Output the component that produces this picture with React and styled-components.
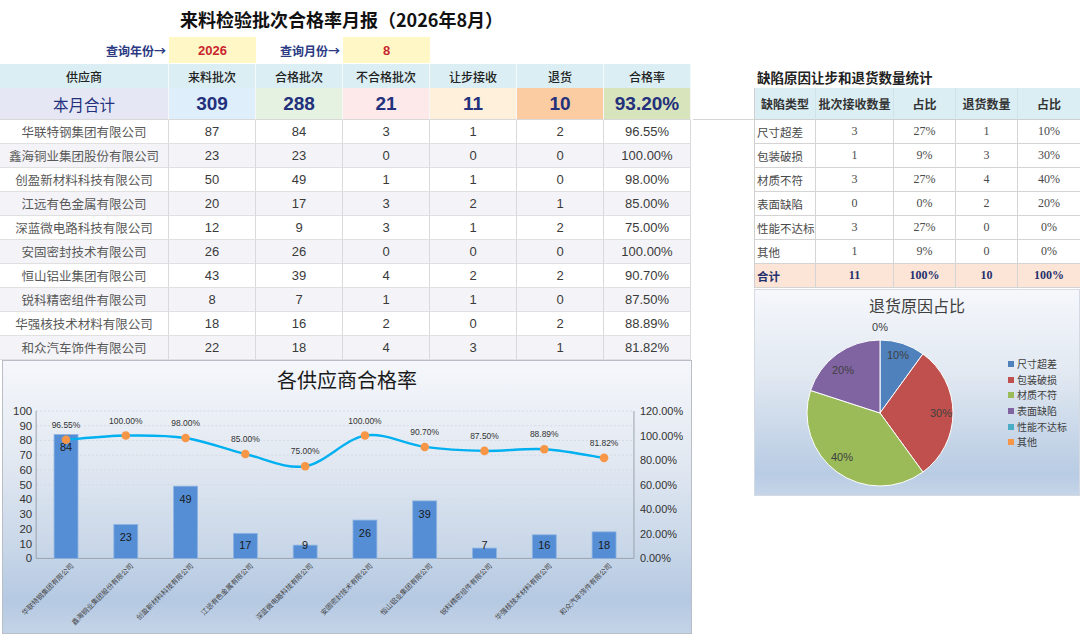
import styled, { createGlobalStyle } from 'styled-components';

const CJK = `"Noto Sans CJK SC", "Liberation Sans", sans-serif`;
const NUM = `"Liberation Sans", "Noto Sans CJK SC", sans-serif`;
const SERIFNUM = `"Liberation Serif", "Noto Sans CJK SC", serif`;

const suppliers = [
  ['华联特钢集团有限公司', 87, 84, 3, 1, 2, 96.55],
  ['鑫海铜业集团股份有限公司', 23, 23, 0, 0, 0, 100],
  ['创盈新材料科技有限公司', 50, 49, 1, 1, 0, 98],
  ['江远有色金属有限公司', 20, 17, 3, 2, 1, 85],
  ['深蓝微电路科技有限公司', 12, 9, 3, 1, 2, 75],
  ['安固密封技术有限公司', 26, 26, 0, 0, 0, 100],
  ['恒山铝业集团有限公司', 43, 39, 4, 2, 2, 90.7],
  ['锐科精密组件有限公司', 8, 7, 1, 1, 0, 87.5],
  ['华强核技术材料有限公司', 18, 16, 2, 0, 2, 88.89],
  ['和众汽车饰件有限公司', 22, 18, 4, 3, 1, 81.82],
];

const defects = [
  ['尺寸超差', 3, '27%', 1, '10%'],
  ['包装破损', 1, '9%', 3, '30%'],
  ['材质不符', 3, '27%', 4, '40%'],
  ['表面缺陷', 0, '0%', 2, '20%'],
  ['性能不达标', 3, '27%', 0, '0%'],
  ['其他', 1, '9%', 0, '0%'],
];

const headers = ['供应商', '来料批次', '合格批次', '不合格批次', '让步接收', '退货', '合格率'];
const totals = ['本月合计', '309', '288', '21', '11', '10', '93.20%'];
const totalColors = ['#e6e7f4', '#deeefa', '#e5f2e2', '#fde8ea', '#fef0da', '#fbcba2', '#d8e4bb'];

const pieColors = ['#4f81bd', '#c0504d', '#9bbb59', '#8064a2', '#4bacc6', '#f79646'];

const GlobalStyle = createGlobalStyle`
  html, body { margin: 0; padding: 0; background: #fff; }
  body { font-family: ${CJK}; }
`;

const Page = styled.div`
  width: 1080px;
  height: 636px;
  overflow: hidden;
  display: grid;
  grid-template-columns: 693px 61px 326px;
  align-items: start;
`;

const LeftCol = styled.div`
  display: flex;
  flex-direction: column;
`;

const ReportTitle = styled.h1`
  margin: 0;
  height: 37px;
  display: flex;
  align-items: center;
  justify-content: center;
  padding-right: 10px;
  font: 700 18px ${CJK};
  color: #111;
`;

const QueryRow = styled.div`
  display: grid;
  grid-template-columns: 169px repeat(6, 87px);
  height: 27px;
`;

const QueryLabel = styled.div`
  display: flex;
  align-items: center;
  justify-content: flex-end;
  padding-right: 3px;
  font: 700 12px ${CJK};
  color: #2b3a82;
`;

const QueryValue = styled.div`
  display: flex;
  align-items: center;
  justify-content: center;
  height: 26px;
  background: #fff8c6;
  font: 700 13px ${NUM};
  color: #c8262d;
`;

const Sheet = styled.div`
  display: grid;
  grid-template-columns: 169px repeat(6, 87px);
  grid-template-rows: 24px 32px repeat(10, 24px);
  width: 691px;
`;

const HeadCell = styled.div`
  display: flex;
  align-items: center;
  justify-content: center;
  background: #daeef3;
  border-right: 1px solid #f4fafb;
  font: 500 12px ${CJK};
  color: #222;
`;

const TotalCell = styled.div`
  display: flex;
  align-items: center;
  justify-content: center;
  background: ${(p) => p.$bg};
  border-right: 1px solid #f7f7f7;
  border-bottom: 1px solid #d8d8d8;
  color: #23307c;
  font: ${(p) => (p.$label ? `400 15.5px ${CJK}` : `700 19px ${NUM}`)};
`;

const DataCell = styled.div`
  display: flex;
  align-items: center;
  justify-content: center;
  background: ${(p) => (p.$alt ? '#f4f4f8' : '#fff')};
  border-right: 1px solid #dadada;
  border-bottom: 1px solid #e0e0e0;
  color: ${(p) => (p.$name ? '#595959' : '#3a3a3a')};
  font: ${(p) => (p.$name ? `400 12.5px ${CJK}` : `400 13px ${NUM}`)};
  white-space: nowrap;
`;

const ChartPanel = styled.div`
  margin-left: 2px;
  width: 690px;
  height: 274px;
  box-sizing: border-box;
  border: 1px solid #b9bec6;
  background: linear-gradient(180deg, #f5f7fb 0%, #e3e9f2 35%, #c7d6e8 70%, #b5c9e2 88%, #c4d3e7 100%);
  display: flex;
  flex-direction: column;
`;

const ChartTitle = styled.div`
  height: 37px;
  display: flex;
  align-items: center;
  justify-content: center;
  font: 400 20px ${CJK};
  color: #1a1a1a;
`;

const GapCol = styled.div`
  height: 120px;
  box-sizing: border-box;
  border-bottom: 1px solid #d6d6d6;
`;

const RightCol = styled.div`
  display: flex;
  flex-direction: column;
  padding-top: 66px;
`;

const SideTitle = styled.div`
  height: 22px;
  display: flex;
  align-items: center;
  padding-left: 3px;
  font: 700 13.5px ${CJK};
  color: #222;
`;

const DefectGrid = styled.div`
  display: grid;
  grid-template-columns: 61px 78px 62px 62px 63px;
  grid-template-rows: 32px repeat(7, 24px);
  border-left: 1px solid #cfcfcf;
`;

const DefectHead = styled.div`
  display: flex;
  align-items: center;
  justify-content: center;
  background: #daeef3;
  border-right: 1px solid #cfe3ea;
  border-bottom: 1px solid #cfcfcf;
  font: 600 12px ${CJK};
  color: #333;
  white-space: nowrap;
`;

const DefectCell = styled.div`
  display: flex;
  align-items: center;
  justify-content: ${(p) => (p.$left ? 'flex-start' : 'center')};
  padding-left: ${(p) => (p.$left ? '2px' : '0')};
  background: ${(p) => (p.$total ? '#fce5d6' : '#fff')};
  border-right: 1px solid #d4d4d4;
  border-bottom: 1px solid #d4d4d4;
  color: ${(p) => (p.$total ? '#24306e' : '#4a4a4a')};
  font: ${(p) => (p.$left ? `${p.$total ? 600 : 400} 11.5px ${CJK}` : `${p.$total ? 700 : 400} 12px ${SERIFNUM}`)};
  white-space: nowrap;
`;

const PiePanel = styled.div`
  margin-top: 1px;
  height: 207px;
  box-sizing: border-box;
  border: 1px solid #d3dae4;
  background: linear-gradient(180deg, #f5f7fb 0%, #e2e9f2 40%, #c4d4e7 75%, #b8cce4 90%, #c6d5e8 100%);
  display: flex;
  flex-direction: column;
`;

const PieTitle = styled.div`
  height: 30px;
  display: flex;
  align-items: center;
  justify-content: center;
  font: 400 16px ${CJK};
  color: #404040;
`;

function smoothPath(pts) {
  let d = `M${pts[0][0]},${pts[0][1]}`;
  for (let i = 0; i < pts.length - 1; i++) {
    const p0 = pts[i - 1] || pts[i];
    const p1 = pts[i];
    const p2 = pts[i + 1];
    const p3 = pts[i + 2] || p2;
    const c1x = p1[0] + (p2[0] - p0[0]) / 6;
    const c1y = p1[1] + (p2[1] - p0[1]) / 6;
    const c2x = p2[0] - (p3[0] - p1[0]) / 6;
    const c2y = p2[1] - (p3[1] - p1[1]) / 6;
    d += ` C${c1x.toFixed(1)},${c1y.toFixed(1)} ${c2x.toFixed(1)},${c2y.toFixed(1)} ${p2[0]},${p2[1].toFixed(1)}`;
  }
  return d;
}

function RateChart() {
  const L = 35, R = 635, T = 410, B = 558, H = B - T;
  const cx = (i) => 65 + 60 * i;
  const yLeft = (v) => B - (v / 100) * H;
  const yRight = (p) => B - (p / 120) * H;
  const pts = suppliers.map((s, i) => [cx(i), yRight(s[6])]);

  return (
    <svg width="688" height="236" viewBox="0 0 688 236">
      <g transform="translate(-3,-397)">
        {[10, 20, 30, 40, 50, 60, 70, 80, 90, 100].map((v) => (
          <line key={v} x1={L} x2={R} y1={yLeft(v)} y2={yLeft(v)} stroke="#d4dbe6" strokeDasharray="2 2" />
        ))}
        <line x1={L} x2={L} y1={T} y2={B} stroke="#9aa3ad" />
        <line x1={R} x2={R} y1={T} y2={B} stroke="#9aa3ad" />
        <line x1={L} x2={R} y1={B} y2={B} stroke="#9aa3ad" />
        {[0, 10, 20, 30, 40, 50, 60, 70, 80, 90, 100].map((v) => (
          <text key={v} x={31} y={yLeft(v) + 4} textAnchor="end" fontSize="11.5" fill="#333" fontFamily={NUM}>{v}</text>
        ))}
        {[0, 20, 40, 60, 80, 100, 120].map((p) => (
          <text key={p} x={641} y={yRight(p) + 4} fontSize="11" fill="#333" fontFamily={NUM}>{p.toFixed(2)}%</text>
        ))}
        {suppliers.map((s, i) => {
          const top = yLeft(s[2]);
          const ly = Math.min(top + 13, B - 13.5);
          return (
            <g key={s[0]}>
              <rect x={cx(i) - 12} y={top} width="24" height={B - top} fill="#558ed5" stroke="#8db3e2" strokeWidth="0.8" />
              <text x={cx(i)} y={ly + 4} textAnchor="middle" fontSize="11" fill="#1a1a1a" fontFamily={NUM}>{s[2]}</text>
              <text
                x={cx(i) + 8}
                y={566}
                textAnchor="end"
                fontSize="7"
                fill="#444"
                fontFamily={CJK}
                transform={`rotate(-45 ${cx(i) + 8} 566)`}
              >
                {s[0]}
              </text>
            </g>
          );
        })}
        <path d={smoothPath(pts)} fill="none" stroke="#00b0f0" strokeWidth="2.4" />
        {pts.map(([x, y], i) => (
          <g key={i}>
            <circle cx={x} cy={y} r="4.3" fill="#f79646" />
            <text x={x} y={y - 12} textAnchor="middle" fontSize="8.5" fill="#333" fontFamily={NUM}>
              {suppliers[i][6].toFixed(2)}%
            </text>
          </g>
        ))}
      </g>
    </svg>
  );
}

function slicePath(cx, cy, r, a0, a1) {
  const x0 = cx + r * Math.cos(a0), y0 = cy + r * Math.sin(a0);
  const x1 = cx + r * Math.cos(a1), y1 = cy + r * Math.sin(a1);
  const large = a1 - a0 > Math.PI ? 1 : 0;
  return `M${cx},${cy} L${x0.toFixed(2)},${y0.toFixed(2)} A${r},${r} 0 ${large} 1 ${x1.toFixed(2)},${y1.toFixed(2)} Z`;
}

function ReturnPie() {
  const cx = 880, cy = 413, r = 73;
  const shares = [0.1, 0.3, 0.4, 0.2, 0, 0];
  let acc = -Math.PI / 2;
  const slices = shares.map((v, i) => {
    const a0 = acc;
    acc += v * Math.PI * 2;
    return { a0, a1: acc, color: pieColors[i], v };
  });
  const labels = [
    ['10%', 898, 355], ['30%', 941, 413], ['40%', 842, 457], ['20%', 843, 370], ['0%', 880, 327],
  ];
  const legendY = [364, 380, 395, 411, 427, 442];

  return (
    <svg width="324" height="175" viewBox="0 0 324 175">
      <g transform="translate(-755,-320)">
        {slices.filter((s) => s.v > 0).map((s) => (
          <path key={s.color} d={slicePath(cx, cy, r, s.a0, s.a1)} fill={s.color} stroke="#fff" strokeWidth="1" />
        ))}
        {labels.map(([t, x, y]) => (
          <text key={t + x} x={x} y={y + 4} textAnchor="middle" fontSize="11" fill="#404040" fontFamily={NUM}>{t}</text>
        ))}
        {defects.map((d, i) => (
          <g key={d[0]}>
            <rect x={1008} y={legendY[i] - 3} width="6" height="6" fill={pieColors[i]} />
            <text x={1017} y={legendY[i] + 3.5} fontSize="10" fill="#404040" fontFamily={CJK}>{d[0]}</text>
          </g>
        ))}
      </g>
    </svg>
  );
}

export default function App() {
  return (
    <>
      <GlobalStyle />
      <Page>
        <LeftCol>
          <ReportTitle>来料检验批次合格率月报（2026年8月）</ReportTitle>
          <QueryRow>
            <QueryLabel>查询年份→</QueryLabel>
            <QueryValue>2026</QueryValue>
            <QueryLabel>查询月份→</QueryLabel>
            <QueryValue>8</QueryValue>
          </QueryRow>
          <Sheet>
            {headers.map((h) => <HeadCell key={h}>{h}</HeadCell>)}
            {totals.map((t, i) => (
              <TotalCell key={i} $bg={totalColors[i]} $label={i === 0}>{t}</TotalCell>
            ))}
            {suppliers.map((s, r) =>
              [s[0], s[1], s[2], s[3], s[4], s[5], `${s[6].toFixed(2)}%`].map((v, c) => (
                <DataCell key={`${r}-${c}`} $alt={r % 2 === 1} $name={c === 0}>{v}</DataCell>
              ))
            )}
          </Sheet>
          <ChartPanel>
            <ChartTitle>各供应商合格率</ChartTitle>
            <RateChart />
          </ChartPanel>
        </LeftCol>
        <GapCol />
        <RightCol>
          <SideTitle>缺陷原因让步和退货数量统计</SideTitle>
          <DefectGrid>
            {['缺陷类型', '批次接收数量', '占比', '退货数量', '占比'].map((h, i) => (
              <DefectHead key={i}>{h}</DefectHead>
            ))}
            {defects.map((d) =>
              d.map((v, c) => (
                <DefectCell key={`${d[0]}-${c}`} $left={c === 0}>{v}</DefectCell>
              ))
            )}
            {['合计', 11, '100%', 10, '100%'].map((v, c) => (
              <DefectCell key={`t-${c}`} $left={c === 0} $total>{v}</DefectCell>
            ))}
          </DefectGrid>
          <PiePanel>
            <PieTitle>退货原因占比</PieTitle>
            <ReturnPie />
          </PiePanel>
        </RightCol>
      </Page>
    </>
  );
}
